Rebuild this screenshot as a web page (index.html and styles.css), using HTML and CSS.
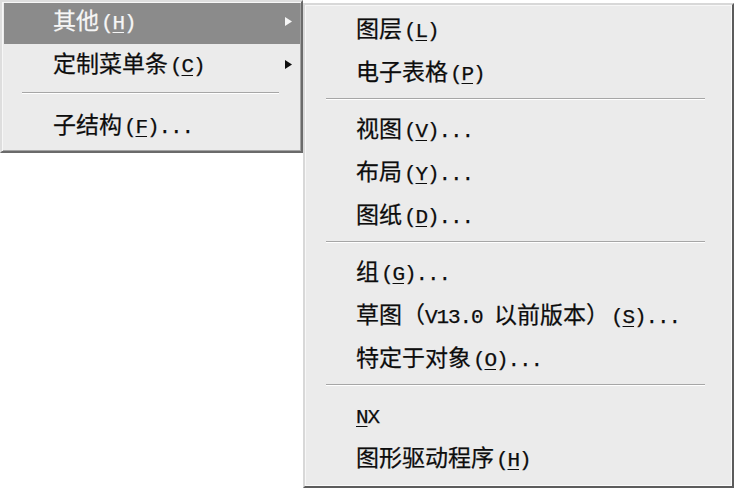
FILE: index.html
```html
<!DOCTYPE html>
<html lang="zh-CN">
<head>
<meta charset="utf-8">
<title>菜单</title>
<link rel="stylesheet" href="styles.css">
</head>
<body>
<div class="desk">
  <div class="menu menu-main">
    <div class="item item-first item-active">
      <span class="label">其他<span class="key">(<u>H</u>)</span></span>
      <svg class="arrow" width="7" height="9" viewBox="0 0 7 9"><polygon points="0,0 7,4.5 0,9" fill="currentColor"/></svg>
    </div>
    <div class="item">
      <span class="label">定制菜单条<span class="key">(<u>C</u>)</span></span>
      <svg class="arrow" width="7" height="9" viewBox="0 0 7 9"><polygon points="0,0 7,4.5 0,9" fill="currentColor"/></svg>
    </div>
    <div class="sep sep-main"></div>
    <div class="item">
      <span class="label">子结构<span class="key">(<u>F</u>)...</span></span>
    </div>
  </div>

  <div class="menu menu-sub">
    <div class="item"><span class="label">图层<span class="key">(<u>L</u>)</span></span></div>
    <div class="item"><span class="label">电子表格<span class="key">(<u>P</u>)</span></span></div>
    <div class="sep sep-sub"></div>
    <div class="item"><span class="label">视图<span class="key">(<u>V</u>)...</span></span></div>
    <div class="item"><span class="label">布局<span class="key">(<u>Y</u>)...</span></span></div>
    <div class="item"><span class="label">图纸<span class="key">(<u>D</u>)...</span></span></div>
    <div class="sep sep-sub"></div>
    <div class="item"><span class="label">组<span class="key">(<u>G</u>)...</span></span></div>
    <div class="item"><span class="label">草图（<span class="key key-inline">V13.0 </span>以前版本）<span class="key">(<u>S</u>)...</span></span></div>
    <div class="item"><span class="label">特定于对象<span class="key">(<u>O</u>)...</span></span></div>
    <div class="sep sep-sub"></div>
    <div class="item"><span class="label"><span class="key key-inline"><u>N</u>X</span></span></div>
    <div class="item"><span class="label">图形驱动程序<span class="key">(<u>H</u>)</span></span></div>
  </div>
</div>
</body>
</html>
```

FILE: styles.css
```css
html, body {
  margin: 0;
  padding: 0;
  background: #ffffff;
}

body {
  width: 734px;
  height: 488px;
  overflow: hidden;
}

.desk {
  display: flex;
  align-items: flex-start;
}

.menu {
  box-sizing: border-box;
  background: #ebebeb;
  border: 2px solid;
  border-color: #dedede #6a6a6a #6a6a6a #dedede;
  box-shadow: inset 1px 1px 0 #f7f7f7, inset -1px -1px 0 #a3a3a3;
  color: #0d0d0d;
  font-family: "Noto Sans CJK SC", "Noto Sans", sans-serif;
  font-size: 23px;
  -webkit-text-stroke: 0.25px currentColor;
}

.menu-main {
  width: 303px;
  height: 153px;
  padding: 1px 1px 3px 2px;
}

.menu-sub {
  width: 431px;
  height: 485px;
  margin-top: 3px;
  padding: 4px 2px 2px 2px;
  border-color: #d8d8d8 #5c5c5c #5c5c5c #d8d8d8;
  box-shadow: inset 1px 1px 0 #f7f7f7, inset -1px -1px 0 #fbfbfb;
}

.item {
  box-sizing: border-box;
  height: 43px;
  line-height: 41px;
  padding: 0 8px 2px 49px;
  display: flex;
  align-items: center;
  justify-content: space-between;
  white-space: nowrap;
}

.item-first {
  height: 41px;
  line-height: 37px;
  padding-bottom: 4px;
}

.item-active {
  background: #8b8b8b;
  color: #f6f6f6;
}

.key {
  font-family: "Liberation Mono", "DejaVu Sans Mono", monospace;
  font-size: 21px;
  letter-spacing: -1.1px;
  margin-left: 2px;
}

.key-inline {
  margin-left: 0;
}

.key u {
  text-decoration: underline;
  text-decoration-thickness: 1px;
  text-underline-offset: 3px;
}

.arrow {
  display: block;
  flex: none;
}

.sep {
  height: 1px;
  background: #a6a6a6;
  border-bottom: 1px solid #ffffff;
}

.sep-main {
  margin: 5px 21px 11px 18px;
}

.sep-sub {
  margin: 3px 25px 9px 19px;
}
```
